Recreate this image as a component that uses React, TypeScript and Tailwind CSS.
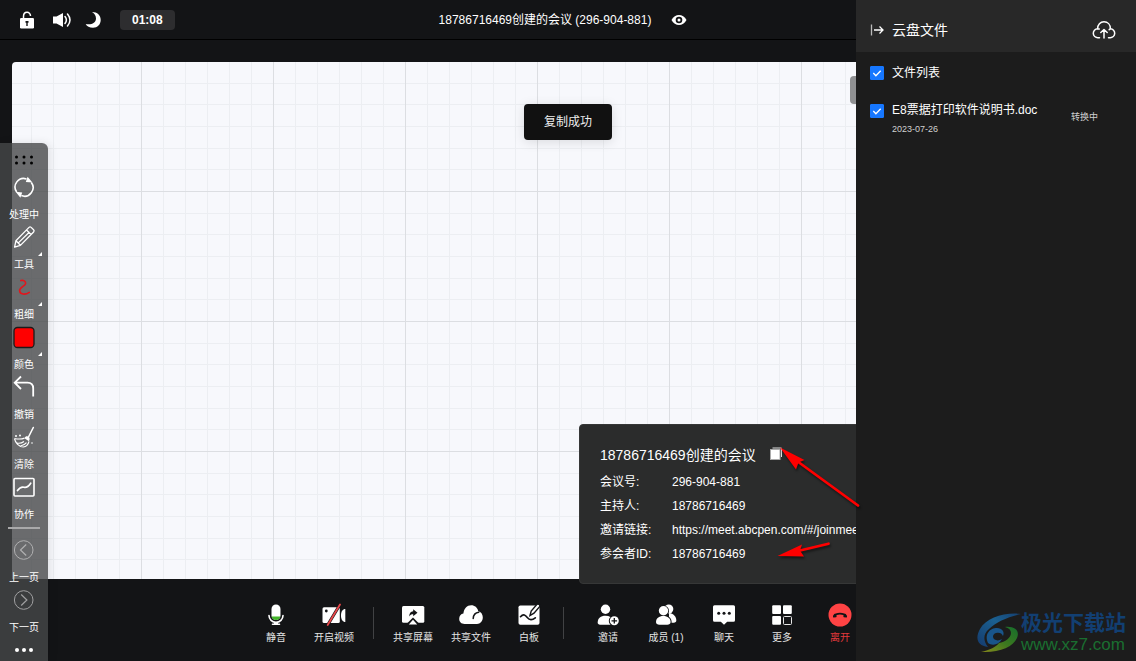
import React from "react";

type Item = { label: string; icon: React.ReactNode; corner?: boolean; danger?: boolean };

function Svg({ size, children }: { size: number; children: React.ReactNode }) {
  return (
    <svg width={size} height={size} viewBox={`0 0 ${size} ${size}`} fill="none" aria-hidden="true" className="shrink-0">
      {children}
    </svg>
  );
}

const DARK = "#131416";

const palette: Item[] = [
  {
    label: "处理中",
    icon: (
      <Svg size={24}>
        <path d="M4.700 17A8.600 8.600 0 0 1 14.500 3.900M19.300 7.400A8.600 8.600 0 0 1 9.300 20.600" stroke="#fff" strokeWidth="1.600" />
        <path d="M15.600 1.800l4.800 5.800-6.600-.6zM8.400 22.700l-4.800-5.900 6.600.6z" fill="#fff" />
      </Svg>
    ),
  },
  {
    label: "工具",
    corner: true,
    icon: (
      <Svg size={24}>
        <path d="M2.600 22.200l1.300-6.400L17 2.400a1.600 1.600 0 0 1 2.200 0l2.400 2.400a1.600 1.600 0 0 1 0 2.200L8.400 20.400zM14.500 5l4.500 4.500M4 15.800l4.400 4.500M6.600 17.600L17.500 7" stroke="#fff" strokeWidth="1.300" strokeLinejoin="round" />
      </Svg>
    ),
  },
  {
    label: "粗细",
    corner: true,
    icon: (
      <Svg size={24}>
        <path d="M8.800 5.600C11.500 4.800 13.800 6.300 13.600 8.500C13.400 11 7.600 12.200 7.600 15.600C7.600 19.800 13.500 20 17.300 17.400" stroke="#e3151c" strokeWidth="1.600" strokeLinecap="round" />
      </Svg>
    ),
  },
  {
    label: "颜色",
    corner: true,
    icon: (
      <Svg size={24}>
        <rect x="2" y="2.500" width="20" height="20" rx="3.500" fill="#f00" stroke="#1b1b1b" strokeWidth="1.300" />
      </Svg>
    ),
  },
  {
    label: "撤销",
    icon: (
      <Svg size={24}>
        <path d="M9 1.500L2.700 7.700 9 14M2.700 7.700H15.500Q21.200 7.700 21.200 13.500V21.500" stroke="#fff" strokeWidth="1.800" />
      </Svg>
    ),
  },
  {
    label: "清除",
    icon: (
      <Svg size={24}>
        <path d="M21.300 2.500L16.500 12" stroke="#fff" strokeWidth="1.600" strokeLinecap="round" />
        <path d="M12.500 13.200c.8-1.800 2-2.300 3.300-1.800 1.500.5 2.200 1.600 1.700 3.400l-.6 1.500z" fill="#fff" />
        <path d="M2.500 13.500c3.500.7 7 .8 10-.4M2.500 13.700c.8 4.200 4.400 8 8.800 8.300 3-.3 5-2.600 5.700-5.600M5 18c2.500.6 5-.1 7-1.500M8.500 21c2.500-.3 4.300-1.500 6-3.400" stroke="#fff" strokeWidth="1.200" />
        <circle cx="4" cy="11" r="1" fill="#fff" />
        <circle cx="8" cy="10.500" r="1" fill="#fff" />
        <circle cx="20" cy="18" r=".8" fill="#fff" />
      </Svg>
    ),
  },
  {
    label: "协作",
    icon: (
      <Svg size={24}>
        <rect x="2" y="3.500" width="20" height="17.500" rx="1" stroke="#fff" strokeWidth="1.600" />
        <path d="M5.500 15.500c2.500-3.500 4-4 6.500-3.300s4.500-.7 6.700-4" stroke="#fff" strokeWidth="1.700" strokeLinecap="round" />
      </Svg>
    ),
  },
];

const pager: Item[] = [
  {
    label: "上一页",
    icon: (
      <Svg size={24}>
        <circle cx="11.700" cy="12" r="9.300" stroke="#b0b0b1" />
        <path d="M14.200 6.500L8.500 12l5.700 5.500" stroke="#b0b0b1" strokeWidth="1.200" />
      </Svg>
    ),
  },
  {
    label: "下一页",
    icon: (
      <Svg size={24}>
        <circle cx="11.700" cy="12" r="9.300" stroke="#a0a0a1" />
        <path d="M9.200 6.500l5.700 5.500-5.700 5.500" stroke="#a0a0a1" strokeWidth="1.200" />
      </Svg>
    ),
  },
];

const mediaActions: Item[] = [
  {
    label: "静音",
    icon: (
      <Svg size={24}>
        <rect x="7.500" y="1.500" width="9" height="15.500" rx="4.500" fill="#fff" />
        <path d="M7.600 13.500h8.800a4.500 4.500 0 0 1-8.800 0z" fill="#43b52a" />
        <path d="M5 12.500a7 6.800 0 0 0 14 0" stroke="#fff" strokeWidth="1.600" strokeLinecap="round" />
        <path d="M10 19h4v1.500h1.500a.8.8 0 0 1 0 1.600h-7a.8.8 0 0 1 0-1.600H10z" fill="#fff" />
      </Svg>
    ),
  },
  {
    label: "开启视频",
    icon: (
      <Svg size={24}>
        <rect x=".5" y="4.300" width="17.300" height="15.700" rx="1.500" fill="#fff" />
        <path d="M23.300 6v13c-2.500 0-4.300-2.300-4.300-6.500S20.800 6 23.300 6z" fill="#fff" />
        <circle cx="4.300" cy="8" r="1.400" fill={DARK} />
        <path d="M5.700 22L18 1.500" stroke={DARK} strokeWidth="3" />
        <path d="M5.700 22L18 1.500" stroke="#e8474a" strokeWidth="1.800" strokeLinecap="round" />
      </Svg>
    ),
  },
];

const shareActions: Item[] = [
  {
    label: "共享屏幕",
    icon: (
      <Svg size={24}>
        <rect x="1" y="3" width="22.300" height="16.700" rx="1.500" fill="#fff" />
        <path d="M12 14.500l6.500 6.500H5.500z" fill={DARK} />
        <path d="M12 16.800l4.200 4.600H7.800z" fill="#fff" />
        <path d="M12.200 6.200l4.300 3.600-4.300 3.400v-2c-2 0-3 .6-4 2.200 0-3 1.300-5 4-5.200z" fill={DARK} />
      </Svg>
    ),
  },
  {
    label: "共享文件",
    icon: (
      <Svg size={24}>
        <path d="M5.500 21C2.300 21 .2 19 .2 15.800c0-2.800 1.700-4.800 4.200-5.200C5 5.500 8 2.300 12.200 2.300c3.600 0 6.200 2.200 7.100 5.900 2.700.7 4.500 2.900 4.500 6.100 0 3.800-2.400 6.700-5.800 6.700z" fill="#fff" />
        <path d="M14.200 15.500c.2-3.500 2-5.900 5.600-6.300" stroke={DARK} strokeWidth="1.500" strokeLinecap="round" />
      </Svg>
    ),
  },
  {
    label: "白板",
    icon: (
      <Svg size={24}>
        <rect x="1.500" y="2.500" width="21" height="19.300" rx="1.800" fill="#fff" />
        <path d="M13 12.500l1.200-4.500L20 1.300c1.500-.8 3.300.6 2.800 2.200L17 10.200z" fill="#fff" stroke={DARK} strokeWidth="1.400" />
        <path d="M3.500 13.700c3-3.400 5-1.500 6.800.8 2.200 2.800 4.800 3 8 .3" stroke={DARK} strokeWidth="1.700" strokeLinecap="round" />
      </Svg>
    ),
  },
];

const peopleActions: Item[] = [
  {
    label: "邀请",
    icon: (
      <Svg size={24}>
        <circle cx="9.500" cy="6.300" r="4.700" fill="#fff" />
        <path d="M1.700 19.500c0-4.300 3-6.700 7.800-6.700 4 0 6.500 1.500 7.500 4.700v4.200H4c-1.500 0-2.300-.8-2.300-2.200z" fill="#fff" />
        <circle cx="18.300" cy="17.800" r="5.500" fill={DARK} />
        <circle cx="18.300" cy="17.800" r="4.500" fill="#fff" />
        <path d="M18.300 15v5.600M15.500 17.800h5.600" stroke={DARK} strokeWidth="1.300" />
      </Svg>
    ),
  },
  {
    label: "成员 (1)",
    icon: (
      <Svg size={24}>
        <circle cx="14.800" cy="6" r="4.500" fill="#fff" />
        <path d="M15 10c4.500.4 7.300 3.500 7.300 7.500 0 1.400-1 2.200-2.500 2.200H15z" fill="#fff" />
        <circle cx="9.500" cy="8" r="5.500" fill={DARK} />
        <path d="M1 19c0-4.500 3.500-7 8.300-7s8.300 2.800 8.300 7v3.500H1z" fill={DARK} />
        <circle cx="9.500" cy="7.800" r="4.700" fill="#fff" />
        <path d="M2 19c0-3.600 2.900-6 7.300-6s7.300 2.400 7.300 6c0 1.800-1.500 2.700-3.300 2.700h-8C3.500 21.700 2 20.800 2 19z" fill="#fff" />
      </Svg>
    ),
  },
  {
    label: "聊天",
    icon: (
      <Svg size={24}>
        <path d="M2.500 2.200h19A1.500 1.500 0 0 1 23 3.700v13.500a1.500 1.500 0 0 1-1.500 1.500h-6.300L12 21.800l-3.200-3.100H2.500A1.500 1.500 0 0 1 1 17.200V3.700a1.500 1.500 0 0 1 1.500-1.500z" fill="#fff" />
        <circle cx="6.700" cy="10.300" r="1.500" fill={DARK} />
        <circle cx="12" cy="10.300" r="1.500" fill={DARK} />
        <circle cx="17.300" cy="10.300" r="1.500" fill={DARK} />
      </Svg>
    ),
  },
  {
    label: "更多",
    icon: (
      <Svg size={24}>
        <rect x="2.200" y="2.300" width="8.800" height="8.800" rx="1" fill="#fff" />
        <rect x="13" y="2.300" width="8.800" height="8.800" rx="1" fill="#fff" />
        <rect x="2.200" y="13" width="8.800" height="8.800" rx="1" fill="#fff" />
        <rect x="13.500" y="13.500" width="8" height="8" rx="1" stroke="#e6e6e6" />
      </Svg>
    ),
  },
  {
    label: "离开",
    danger: true,
    icon: (
      <Svg size={24}>
        <circle cx="12" cy="12" r="11.500" fill="#ff4344" />
        <path d="M6.300 13c1.600-3.300 9.800-3.300 11.400 0" stroke={DARK} strokeWidth="1.800" />
        <path d="M5 13.200c.2-1.300 1-2.200 2.200-2.800l1.600 2.600-.6 1.200-2.400.4c-.6 0-.9-.6-.8-1.400zM19 13.200c-.2-1.300-1-2.200-2.200-2.800L15.200 13l.6 1.200 2.400.4c.6 0 .9-.6.8-1.400z" fill={DARK} />
      </Svg>
    ),
  },
];

function PaletteButton({ item }: { item: Item }) {
  return (
    <button type="button" className="relative flex h-[50px] w-full flex-col items-center gap-[9px]">
      {item.icon}
      <span className="text-[10px] leading-[14px] whitespace-nowrap">{item.label}</span>
      {item.corner && (
        <svg width="4" height="4" viewBox="0 0 4 4" className="absolute top-[27px] right-1.5" aria-hidden="true">
          <path d="M4 0v4H0z" fill="#fff" />
        </svg>
      )}
    </button>
  );
}

function ActionButton({ item }: { item: Item }) {
  return (
    <button type="button" className="flex w-[58px] flex-col items-center gap-1">
      {item.icon}
      <span className={item.danger ? "text-[10px] leading-[14px] text-[#e2393c]" : "text-[10px] leading-[14px] text-[#e4e4e4]"}>{item.label}</span>
    </button>
  );
}

function GridCanvas() {
  const xs = [22, 44, 66, 88, 110];
  const ys = [22, 43, 65, 87, 108];
  return (
    <svg width="100%" height="100%" className="absolute inset-0" aria-hidden="true">
      <defs>
        <pattern id="grid" x="129" y="129" width="132" height="130" patternUnits="userSpaceOnUse">
          {xs.map((x) => (
            <rect key={x} x={x} y="0" width="1" height="130" fill="#eceef2" />
          ))}
          {ys.map((y) => (
            <rect key={y} x="0" y={y} width="132" height="1" fill="#eceef2" />
          ))}
          <rect width="1" height="130" fill="#dcdee2" />
          <rect width="132" height="1" fill="#dcdee2" />
        </pattern>
      </defs>
      <rect width="100%" height="100%" fill="url(#grid)" />
    </svg>
  );
}

const details = [
  ["会议号:", "296-904-881"],
  ["主持人:", "18786716469"],
  ["邀请链接:", "https://meet.abcpen.com/#/joinmee"],
  ["参会者ID:", "18786716469"],
];

function MeetingCard() {
  return (
    <section className="absolute right-0 bottom-[77px] left-[579px] h-40 rounded border border-[#363737] bg-[#2b2c2c] px-5 pt-[19px]">
      <div className="flex h-[22px] items-center gap-3.5">
        <h2 className="text-sm">18786716469创建的会议</h2>
        <button type="button" aria-label="复制" className="pb-1">
          <svg width="12" height="13" viewBox="0 0 12 13" aria-hidden="true">
            <path d="M2.500 1H11.500V10" fill="none" stroke="#ddd" />
            <rect y="2" width="10.500" height="11" fill="#aaa" />
            <rect x="1" y="3" width="8.500" height="9" fill="#fff" />
          </svg>
        </button>
      </div>
      <dl className="mt-1 grid grid-cols-[72px_1fr] text-xs leading-6">
        {details.map(([name, value]) => (
          <React.Fragment key={name}>
            <dt>{name}</dt>
            <dd className="whitespace-nowrap">{value}</dd>
          </React.Fragment>
        ))}
      </dl>
    </section>
  );
}

function Tick({ id }: { id: string }) {
  return (
    <span className="grid size-3.5 shrink-0">
      <input id={id} type="checkbox" defaultChecked className="peer col-start-1 row-start-1 size-3.5 appearance-none rounded-[1px] border border-[#1677ff] bg-[#1b1b1b] checked:bg-[#1677ff]" />
      <svg viewBox="0 0 14 14" className="pointer-events-none col-start-1 row-start-1 hidden size-3.5 peer-checked:block" aria-hidden="true">
        <path d="M3.300 7l2.600 2.700 4.800-5" fill="none" stroke="#fff" strokeWidth="1.300" />
      </svg>
    </span>
  );
}

function CloudPanel() {
  return (
    <aside className="z-10 col-start-1 row-start-1 flex w-[280px] flex-col justify-self-end bg-[#1c1c1c]">
      <header className="flex h-[52px] items-center bg-[#282828] pt-2 pr-5 pl-3.5">
        <button type="button" aria-label="收起">
          <svg width="14" height="14" viewBox="0 0 14 14" fill="none" stroke="#fff" strokeWidth="1.300" aria-hidden="true">
            <path d="M1.500 1.500v11" stroke="#bbb" />
            <path d="M4 7h9M9.500 3.500L13 7l-3.500 3.500" />
          </svg>
        </button>
        <h2 className="ml-2 flex-1 text-sm">云盘文件</h2>
        <button type="button" aria-label="上传">
          <svg width="24" height="20" viewBox="0 0 24 20" fill="none" stroke="#fff" strokeWidth="1.500" strokeLinecap="round" strokeLinejoin="round" aria-hidden="true">
            <path d="M7.500 17.700H6A4.500 4.500 0 0 1 5.600 8.700C5.600 4.600 8.300 1.800 12 1.800s6.400 2.800 6.400 6.900a4.500 4.500 0 0 1-.4 9h-1.500M5.600 8.700l1.600.4M18.400 8.700l-1.200 1" />
            <path d="M12 18V10M8.800 12.500L12 9.500l3.200 3" />
          </svg>
        </button>
      </header>
      <label htmlFor="all" className="mt-3 flex h-[18px] items-center gap-2 px-3.5 text-xs">
        <Tick id="all" />
        文件列表
      </label>
      <div className="mt-5 flex items-start px-3.5">
        <label htmlFor="file" className="flex flex-1 items-start gap-2">
          <span className="pt-0.5">
            <Tick id="file" />
          </span>
          <span className="flex flex-col">
            <span className="text-xs leading-4">E8票据打印软件说明书.doc</span>
            <span className="mt-1 text-[9px] leading-[14px] text-[#d0d0d0]">2023-07-26</span>
          </span>
        </label>
        <span className="mt-2 mr-6 text-[9px] leading-[14px] text-[#d0d0d0]">转换中</span>
      </div>
      <div className="mt-auto mr-2.5 mb-1.5 flex items-center self-end">
        <svg width="44" height="40" viewBox="0 0 44 40" fill="none" aria-hidden="true">
          <defs>
            <linearGradient id="blue" x1="0" y1="1" x2="1" y2="0">
              <stop offset="0" stopColor="#153a6c" />
              <stop offset=".6" stopColor="#1b6090" />
              <stop offset="1" stopColor="#153f70" />
            </linearGradient>
            <linearGradient id="green" x1="0" y1="1" x2="1" y2="0">
              <stop offset="0" stopColor="#8b8c1c" />
              <stop offset=".5" stopColor="#3c781f" />
              <stop offset="1" stopColor="#156e2c" />
            </linearGradient>
          </defs>
          <path d="M44 1C28-1 9 5 3 16c-5 9-3 17 8 18-5-6-5-13 1-18C19 9 31 4 44 1z" fill="url(#blue)" />
          <path d="M11 30c-4-9 2-15 9-15 5 0 8 4 6 8-1-3-4-4-7-3-4 1-4 6 0 7 2 1 4 0 6-1-3 6-10 7-14 4z" fill="#19558a" />
          <path d="M28 14c10-1 15 4 12 11C36 34 22 40 4 39c9-2 15-5 18-9 6-1 12-5 12-10 0-3-2-5-6-6z" fill="url(#green)" />
        </svg>
        <p className="flex flex-col">
          <span className="text-[21px] leading-6 font-bold text-[#123f72]">极光下载站</span>
          <span className="text-[17px] leading-5 text-[#1a6e30]">www.xz7.com</span>
        </p>
      </div>
    </aside>
  );
}

export default function App() {
  return (
    <div className="grid min-h-screen overflow-hidden bg-[#131416] font-['Liberation_Sans','Noto_Sans_CJK_SC',sans-serif] text-white">
      <main className="relative col-start-1 row-start-1 flex flex-col overflow-hidden">
        <header className="grid h-10 grid-cols-[1fr_auto_1fr] items-center border-b border-black">
          <div className="flex items-center pl-[19px]">
            <button type="button" aria-label="锁定">
              <svg width="16" height="18" viewBox="0 0 16 18" aria-hidden="true">
                <path d="M4.500 8V5.500C4.500 0 11.500 0 11.500 5" fill="none" stroke="#fff" strokeWidth="1.500" />
                <rect x="1" y="7" width="14" height="10.500" rx="1.200" fill="#fff" />
                <path d="M6.500 10h3v1.700H8.700V15H7.300v-3.300h-.8z" fill={DARK} />
              </svg>
            </button>
            <button type="button" aria-label="扬声器" className="ml-4">
              <svg width="22" height="18" viewBox="0 0 22 18" aria-hidden="true">
                <path d="M2 5.500h3.500L12 2v14l-6.500-3.500H2z" fill="#fff" />
                <path d="M14 5.500q2.800 3.500 0 7M16.500 3q5 6 0 12" fill="none" stroke="#fff" strokeWidth="1.500" strokeLinecap="round" />
              </svg>
            </button>
            <button type="button" aria-label="夜间模式" className="ml-3">
              <svg width="16" height="18" viewBox="0 0 16 18" aria-hidden="true">
                <path d="M7 1c5.500 0 8.700 3.500 8.700 8s-3.200 7.700-7.700 7.700C4.500 16.700 2 15.500.7 13c5.300 1.300 10.300-1 10.300-5.500C11 4.700 9.500 2.500 7 1z" fill="#fff" />
              </svg>
            </button>
            <time className="ml-[19px] rounded bg-[#2d2d2f] px-3 text-xs leading-5 font-bold">01:08</time>
          </div>
          <div className="flex items-center gap-5 pr-2.5">
            <h1 className="text-xs">18786716469创建的会议 (296-904-881)</h1>
            <button type="button" aria-label="显示">
              <svg width="16" height="12" viewBox="0 0 16 12" aria-hidden="true">
                <path d="M.5 6C4-.7 12-.7 15.500 6 12 12.700 4 12.700.5 6z" fill="#fff" />
                <circle cx="8" cy="6" r="3.300" fill={DARK} />
                <circle cx="8" cy="6" r="1.500" fill="#fff" />
              </svg>
            </button>
          </div>
        </header>

        <div className="relative mt-[22px] ml-3 flex-1 overflow-hidden rounded-tl bg-[#f7f8fc]">
          <GridCanvas />
          <span className="absolute top-3.5 right-[274px] h-7 w-3 rounded bg-[#8f9092]" />
        </div>

        <footer className="flex h-[82px] items-start justify-center pt-6 pr-5">
          {mediaActions.map((item) => (
            <ActionButton key={item.label} item={item} />
          ))}
          <span className="mx-2.5 mt-1 h-8 w-px bg-[#414244]" />
          {shareActions.map((item) => (
            <ActionButton key={item.label} item={item} />
          ))}
          <span className="mt-1 mr-[15px] ml-[5px] h-8 w-px bg-[#414244]" />
          {peopleActions.map((item) => (
            <ActionButton key={item.label} item={item} />
          ))}
        </footer>

        <MeetingCard />

        <div role="status" className="absolute top-[104px] left-1/2 -translate-x-1/2 rounded bg-[#111] px-5 text-xs leading-9 text-[#eee] shadow-[0_2px_12px_rgba(0,0,0,0.12)]">
          复制成功
        </div>

        <nav className="absolute bottom-0 left-0 flex w-12 flex-col items-center rounded-tr-md bg-[rgba(70,71,72,0.8)] shadow-[2px_0_8px_rgba(0,0,0,0.1)]">
          <svg width="20" height="32" viewBox="0 0 20 32" fill="#000" aria-hidden="true">
            {[2.5, 10, 17.5].map((x) => (
              <React.Fragment key={x}>
                <circle cx={x} cy="14" r="1.500" />
                <circle cx={x} cy="20" r="1.500" />
              </React.Fragment>
            ))}
          </svg>
          {palette.map((item) => (
            <PaletteButton key={item.label} item={item} />
          ))}
          <span className="mt-0.5 mb-[9px] h-0.5 w-8 bg-[#a9a9aa]" />
          {pager.map((item) => (
            <PaletteButton key={item.label} item={item} />
          ))}
          <button type="button" aria-label="更多工具" className="flex h-[23px] items-center gap-[3px]">
            <span className="size-1 rounded-full bg-white" />
            <span className="size-1 rounded-full bg-white" />
            <span className="size-1 rounded-full bg-white" />
          </button>
        </nav>
      </main>

      <CloudPanel />

      <div className="pointer-events-none relative z-20 col-start-1 row-start-1">
        <svg width="90" height="120" viewBox="0 0 90 120" className="absolute bottom-[96px] left-[775px] drop-shadow-[1px_2px_1px_rgba(0,0,0,0.5)]" aria-hidden="true">
          <path d="M24 17.500L83 60.500M25 105.500L53.500 98.700" stroke="#f00" strokeWidth="2.700" strokeLinecap="round" />
          <path d="M5 2.500L29.500 15l-6 2.500-2.500 7zM2.500 111L27 99.500l-2 6 4 6z" fill="#f00" />
        </svg>
      </div>
    </div>
  );
}
